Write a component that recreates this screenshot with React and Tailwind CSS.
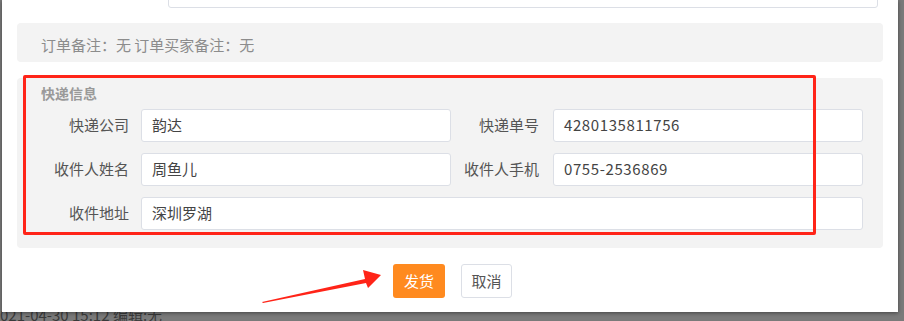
import React from 'react';

const font = { fontFamily: '"Noto Sans CJK SC", "Noto Sans", sans-serif' };

function Field({ label, value, labelClass, inputClass }) {
  return (
    <div className="flex items-center">
      <label className={`shrink-0 text-right text-[15px] text-[#555] ${labelClass}`}>{label}</label>
      <div
        className={`flex h-[33px] items-center rounded-[3px] border border-[#dcdfe6] bg-white px-[10px] text-[15px] text-[#444] ${inputClass}`}
      >
        {value}
      </div>
    </div>
  );
}

export default function App() {
  return (
    <div className="relative h-[321px] w-[904px] overflow-hidden bg-[#7a7a7a]" style={font}>
      {/* page behind the dialog */}
      <div className="absolute left-0 top-[305px] whitespace-nowrap text-[15px] leading-[20px] text-[#3a3a3a]">
        021-04-30 15:12 编辑:无
      </div>

      {/* dialog */}
      <div className="absolute left-[2px] top-0 h-[312px] w-[896px] bg-white shadow-[0_1px_4px_rgba(0,0,0,0.45)]">
        <div className="ml-[166px] mt-[-26px] h-[34px] w-[710px] rounded-[3px] border border-[#dcdfe6] bg-white" />

        <div className="mx-[15px] mt-[15px] flex h-[39px] items-center rounded-[4px] bg-[#f3f3f3] px-[24px] pt-[6px] text-[15px] text-[#8c8c8c]">
          订单备注：无 订单买家备注：无
        </div>

        <div className="mx-[15px] mt-[16px] h-[170px] rounded-[4px] bg-[#f3f3f3]">
          <div className="pl-[24px] pt-[5px] text-[14px] font-semibold leading-[20px] text-[#999]">快递信息</div>
          <div className="mt-[6px] flex flex-col gap-[11px]">
            <div className="flex">
              <Field label="快递公司" value="韵达" labelClass="w-[112px] mr-[12px]" inputClass="w-[310px]" />
              <Field
                label="快递单号"
                value="4280135811756"
                labelClass="w-[88px] mr-[14px]"
                inputClass="w-[310px] tracking-[0.6px]"
              />
            </div>
            <div className="flex">
              <Field label="收件人姓名" value="周鱼儿" labelClass="w-[112px] mr-[12px]" inputClass="w-[310px]" />
              <Field
                label="收件人手机"
                value="0755-2536869"
                labelClass="w-[88px] mr-[14px]"
                inputClass="w-[310px] tracking-[0.6px]"
              />
            </div>
            <Field label="收件地址" value="深圳罗湖" labelClass="w-[112px] mr-[12px]" inputClass="w-[722px]" />
          </div>
        </div>

        <div className="mt-[16px] flex justify-center gap-[16px] pl-[5px]">
          <button className="flex h-[34px] w-[52px] items-center justify-center rounded-[3px] bg-[#ff8a1f] text-[15px] text-white">
            发货
          </button>
          <button className="flex h-[34px] w-[51px] items-center justify-center rounded-[3px] border border-[#dcdfe6] bg-white text-[15px] text-[#555]">
            取消
          </button>
        </div>
      </div>

      {/* annotation */}
      <div className="pointer-events-none absolute left-[23px] top-[75px] h-[160px] w-[793px] rounded-[2px] border-[3px] border-[#ff2418]" />
      <svg className="pointer-events-none absolute left-0 top-0" width="904" height="321" viewBox="0 0 904 321">
        <polygon points="262,302 365,279 363,270 381,275 368,288 366,283 263,303" fill="#ff2418" />
      </svg>
    </div>
  );
}
